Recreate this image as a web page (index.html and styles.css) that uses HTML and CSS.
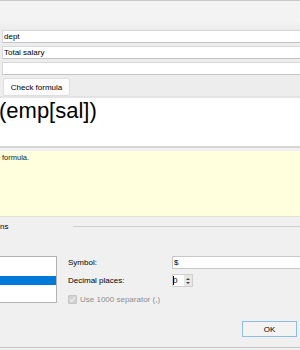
FILE: index.html
```html
<!DOCTYPE html>
<html lang="en">
<head>
  <meta charset="UTF-8">
  <title>Formula editor</title>
  <link rel="stylesheet" href="styles.css">
</head>
<body>
  <div class="toolbar"></div>

  <div class="fields">
    <div class="field">dept</div>
    <div class="field">Total salary</div>
    <div class="field"></div>
    <button class="check-btn">Check formula</button>
  </div>

  <div class="editor">(emp[sal])</div>
  <div class="message">formula.</div>

  <div class="options">
    <div class="group-title">
      <span class="group-name">ns</span>
      <span class="rule"></span>
    </div>

    <div class="group-body">
      <div class="list">
        <div class="item"></div>
        <div class="item"></div>
        <div class="item selected"></div>
        <div class="item"></div>
      </div>

      <div class="form">
        <label>Symbol:</label>
        <div class="text-input">$</div>

        <label>Decimal places:</label>
        <div class="spinner">
          <div class="spin-value"><span class="caret"></span>0</div>
          <div class="spin-arrows">
            <span class="up"></span>
            <span class="down"></span>
          </div>
        </div>

        <div class="check-row">
          <span class="checkbox">
            <svg width="7" height="7" viewBox="0 0 7 7"><path d="M1 3.6 L2.8 5.3 L6 1.5" fill="none" stroke="#f4f4f4" stroke-width="1.1"/></svg>
          </span>
          <span>Use 1000 separator (,)</span>
        </div>
      </div>
    </div>

    <div class="footer">
      <button class="ok-btn">OK</button>
    </div>
  </div>
</body>
</html>
```

FILE: styles.css
```css
* {
  box-sizing: border-box;
}

body {
  margin: 0;
  width: 300px;
  height: 350px;
  overflow: hidden;
  background-color: #f0f0f0;
  font-family: "Liberation Sans", Arial, sans-serif;
  font-size: 8px;
  color: #000;
}

.toolbar {
  height: 30px;
  border-top: 1px solid #c9c9c9;
  background: linear-gradient(#f3f3f3, #f3f3f3 65%, #ececec);
}

.fields {
  padding-left: 2px;
  background-color: #ededed;
}

.field {
  height: 13px;
  margin-bottom: 3px;
  padding-left: 1px;
  line-height: 11px;
  background-color: #fff;
  border: 1px solid #d8d8d8;
  border-bottom-color: #c4c4c4;
  border-right: none;
}

.check-btn {
  display: block;
  width: 67px;
  height: 18px;
  margin: 1px 0 0 1px;
  padding: 0;
  font-family: inherit;
  font-size: 8px;
  color: #000;
  background-color: #fcfcfc;
  border: 1px solid #dedede;
  border-radius: 2px;
}

.editor {
  height: 52px;
  border-top: 2px solid #e3e3e3;
  border-bottom: 2px solid #d6d6d6;
  margin-bottom: 3px;
  background-color: #fff;
  font-size: 22px;
  text-indent: -1px;
  white-space: nowrap;
}

.message {
  height: 66px;
  padding: 2px 2px;
  font-size: 7.5px;
  color: #222;
  background-color: #ffffde;
  border-bottom: 1px solid #e4e4d0;
}

.options {
  display: flex;
  flex-direction: column;
  height: 131px;
  border-bottom: 1px solid #c6c6c6;
}

.group-title {
  display: flex;
  align-items: center;
  height: 9px;
  margin-top: 5px;
  line-height: 9px;
}

.group-name {
  width: 73px;
}

.rule {
  flex: 1;
  border-top: 1px solid #cfcfcf;
}

.group-body {
  display: flex;
  margin-top: 25px;
}

.list {
  width: 57px;
  height: 47px;
  padding-top: 1px;
  background-color: #fff;
  border: 1px solid #b4b4b4;
  border-left: none;
}

.item {
  height: 9px;
}

.item.selected {
  background-color: #0078d7;
}

.form {
  flex: 1;
  display: grid;
  grid-template-columns: 104px 1fr;
  grid-auto-rows: 13px;
  row-gap: 5px;
  align-items: center;
  margin-left: 11px;
}

.text-input {
  height: 13px;
  padding-left: 1px;
  line-height: 11px;
  background-color: #fff;
  border: 1px solid #c8c8c8;
  border-right: none;
}

.spinner {
  display: flex;
  width: 21px;
  height: 13px;
  border: 1px solid #d0d0d0;
}

.spin-value {
  flex: 1;
  display: flex;
  align-items: center;
  line-height: 11px;
  background-color: #fff;
}

.caret {
  width: 1px;
  height: 9px;
  margin-right: -1px;
  background-color: #000;
}

.spin-arrows {
  width: 8px;
  display: flex;
  flex-direction: column;
  align-items: center;
  justify-content: center;
  gap: 2px;
  background-color: #e6e6e6;
}

.up,
.down {
  width: 0;
  height: 0;
  border-left: 2px solid transparent;
  border-right: 2px solid transparent;
}

.up {
  border-bottom: 2px solid #444;
}

.down {
  border-top: 2px solid #444;
}

.check-row {
  grid-column: 1 / -1;
  display: flex;
  align-items: center;
  gap: 3px;
  margin-top: 2px;
  color: #8d8d8d;
}

.checkbox {
  display: flex;
  align-items: center;
  justify-content: center;
  width: 9px;
  height: 9px;
  background-color: #d3d3d3;
  border: 1px solid #c6c6c6;
  border-radius: 1px;
}

.footer {
  display: flex;
  justify-content: flex-end;
  margin-top: auto;
  padding: 0 3px 10px 0;
}

.ok-btn {
  width: 55px;
  height: 16px;
  padding: 0;
  font-family: inherit;
  font-size: 8px;
  color: #000;
  background-color: #f3f3f3;
  border: 1px solid #8fbde9;
}
```
